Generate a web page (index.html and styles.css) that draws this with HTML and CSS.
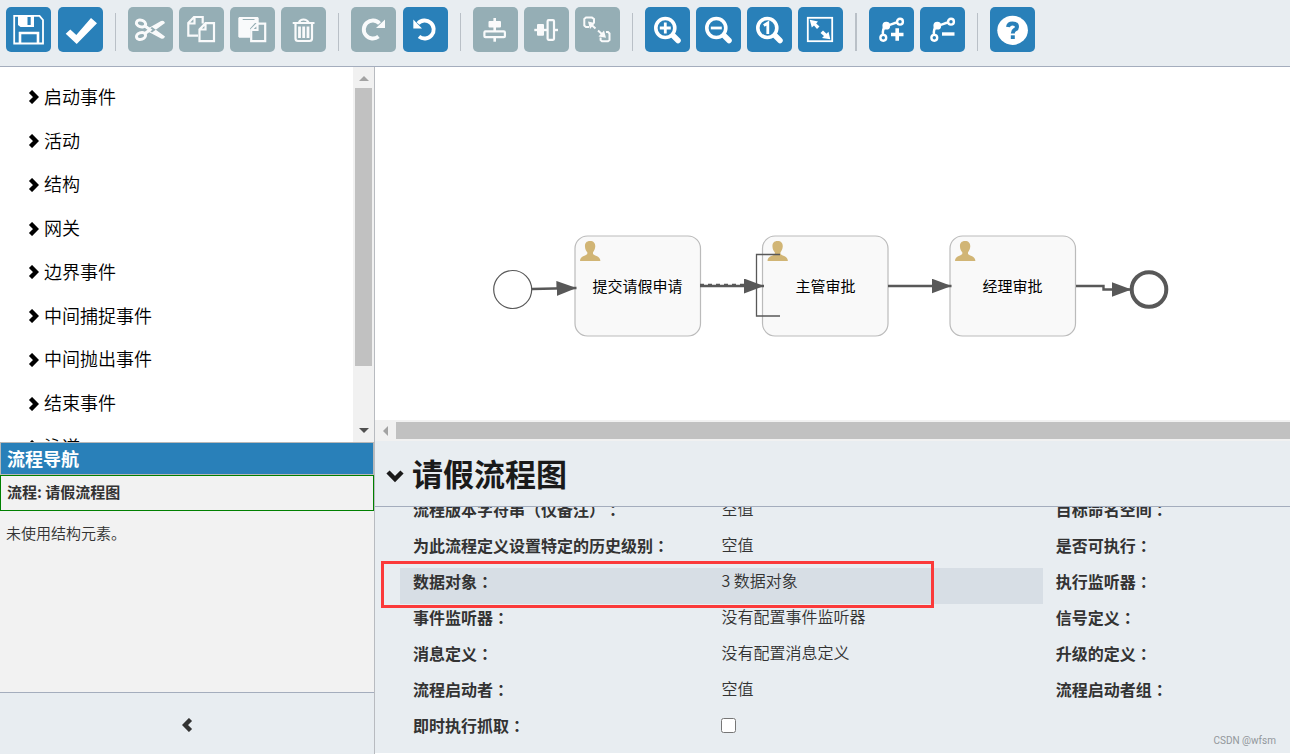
FILE: index.html
```html
<!DOCTYPE html>
<html lang="zh-CN">
<head>
<meta charset="utf-8">
<title>流程编辑器</title>
<link rel="stylesheet" href="styles.css">
</head>
<body>
<svg class="defs" width="0" height="0" aria-hidden="true">
  <defs>
    <path id="chevron" d="M2.500 1.500L8 7 2.500 12.500" fill="none" stroke="currentColor" stroke-width="4.400"/>
    <path id="person" d="M10 0c4 0 5.600 2.600 5.200 6-.3 2.400-1.200 4-2.200 5.200v1.900c1.500 1.800 7.200 2 7.400 6.900H0c.2-4.900 5.800-5.100 7.300-6.900v-1.900C6.100 10 5.200 8.400 5 6 4.700 2.600 6 0 10 0z" fill="#d1b575"/>
    <g id="lens">
      <circle cx="20.300" cy="21" r="9.500" fill="none" stroke="#fff" stroke-width="3.600"/>
      <path d="M28.500 29L33 33.500" stroke="#fff" stroke-width="5.500" stroke-linecap="round"/>
    </g>
    <g id="bend" fill="none" stroke="#fff" stroke-width="2.400">
      <circle cx="31" cy="14.700" r="2.900"/>
      <circle cx="14.300" cy="30.800" r="2.900"/>
      <path d="M28 15.500C24 16 22 18.500 17 18.500M17 18.500Q13 22 14 28"/>
      <circle cx="17.300" cy="18.700" r="2.700" fill="#fff"/>
    </g>
    <marker id="arrow" viewBox="0 0 20 15" refX="20" refY="7.500" markerWidth="20" markerHeight="15" markerUnits="userSpaceOnUse" orient="auto">
      <path d="M0 0L20 7.500 0 15z" fill="#585858"/>
    </marker>
  </defs>
</svg>

<header class="toolbar">
  <div class="group wide">
    <button class="tool" aria-label="保存"><svg viewBox="0 0 45 45"><path d="M8.200 8.800H33.500L37 13V36.500H8.200z" fill="none" stroke="#fff" stroke-width="1.800"/><path d="M12 8h16v12H14.500L12 18z" fill="#fff"/><path d="M21.500 10h3.200v8h-3.200z" fill="#2980b9"/><path d="M14 37V26h18v11" fill="none" stroke="#fff" stroke-width="2.600"/></svg></button>
    <button class="tool" aria-label="校验"><svg viewBox="0 0 45 45"><path d="M7.700 26.700L12.300 22.500 18.300 28 33 11 39 16.300 18.700 37z" fill="#fff"/></svg></button>
  </div>
  <span class="sep"></span>
  <div class="group">
    <button class="tool off" aria-label="剪切"><svg viewBox="0 0 45 45"><g fill="none" stroke="#fff" stroke-width="3"><ellipse cx="13" cy="16.500" rx="4.700" ry="3.300" transform="rotate(20 13 16.500)"/><ellipse cx="13" cy="29" rx="4.700" ry="3.300" transform="rotate(-20 13 29)"/><path d="M17 19L22 22.800 17 26.500"/></g><path d="M19 22L33 14q3-1 4 2L24 25.500zM19 24L33 31.500q3 1 4-2L24 20z" fill="#fff"/></svg></button>
    <button class="tool off" aria-label="复制"><svg viewBox="0 0 45 45"><g fill="none" stroke="#fff" stroke-width="2.200"><path d="M19 28.700H9.300V16L15 10H23.700V16.500M9.300 16.500H15.500V10"/><path d="M20.500 34.200V22.500L26.500 16.200H35V34.200zM20.500 22.500H26.500V16.200"/></g></svg></button>
    <button class="tool off" aria-label="粘贴"><svg viewBox="0 0 45 45"><path d="M9.300 10H27.700l1 1V16H25L20 21.500V30.700H9.300l-1-1V11z" fill="#fff"/><path d="M12.700 12.500H24.500" stroke="#95aeb5" stroke-width="1"/><path d="M21.200 34.200V23L27.500 16.700H35.200V34.200zM21.200 23H27.500V16.700" fill="none" stroke="#fff" stroke-width="2.200"/></svg></button>
    <button class="tool off" aria-label="删除"><svg viewBox="0 0 45 45"><g fill="none" stroke="#fff" stroke-width="2.200"><path d="M11.700 16H33.500M18 15.500Q19 12.500 22.500 12.500T27.500 15.500M14.500 16V31.500Q14.500 34 17 34H28.500Q31 34 31 31.500V16"/></g><path d="M18.500 19.500V31M22.700 19.500V31M27 19.500V31" stroke="#fff" stroke-width="2.800"/></svg></button>
  </div>
  <span class="sep"></span>
  <div class="group wide">
    <button class="tool off" aria-label="重做"><svg viewBox="0 0 45 45"><path d="M27.500 29.500A9 9 0 1 1 28.500 16.500" fill="none" stroke="#fff" stroke-width="3.900"/><path d="M34 12.500V21H25z" fill="#fff"/></svg></button>
    <button class="tool" aria-label="撤销"><svg viewBox="0 0 45 45"><path d="M16 29.500A9 9 0 1 0 15 16.500" fill="none" stroke="#fff" stroke-width="3.900"/><path d="M10.300 12.500V21.500H19z" fill="#fff"/></svg></button>
  </div>
  <span class="sep"></span>
  <div class="group">
    <button class="tool off" aria-label="垂直对齐"><svg viewBox="0 0 45 45"><path d="M21.700 11V34.700" stroke="#fff" stroke-width="2.600"/><rect x="15.500" y="14" width="12.500" height="6.500" rx="1" fill="#fff"/><rect x="11.400" y="24.400" width="20.500" height="5.800" rx="1" fill="#95aeb5" stroke="#fff" stroke-width="2.200"/></svg></button>
    <button class="tool off" aria-label="水平对齐"><svg viewBox="0 0 45 45"><path d="M10.300 23H34" stroke="#fff" stroke-width="2.400"/><rect x="13" y="17" width="7" height="11.700" rx="1" fill="#fff"/><rect x="23.600" y="13.200" width="6.400" height="19.600" rx="1" fill="#95aeb5" stroke="#fff" stroke-width="2.200"/></svg></button>
    <button class="tool off" aria-label="同样大小"><svg viewBox="0 0 45 45"><g fill="none" stroke="#fff" stroke-width="2"><path d="M14 20H11L9.300 18.500V12L11 10.600H17L19 12V16"/><path d="M31 25H33L34.500 26.500V33L33 34.200H27L25.600 33V30.500"/><path d="M15 16.500L20.500 21.500M23 23.500L29 29"/></g><path d="M13 14.500L20 16 15 22zM31 30.700L23.500 29.500 29 23.500z" fill="#fff"/></svg></button>
  </div>
  <span class="sep"></span>
  <div class="group">
    <button class="tool" aria-label="放大"><svg viewBox="0 0 45 45"><use href="#lens"/><path d="M14.800 21H25.800M20.300 15.500V26.500" stroke="#fff" stroke-width="2.800"/></svg></button>
    <button class="tool" aria-label="缩小"><svg viewBox="0 0 45 45"><use href="#lens"/><path d="M14.800 21H25.800" stroke="#fff" stroke-width="2.800"/></svg></button>
    <button class="tool" aria-label="实际大小"><svg viewBox="0 0 45 45"><use href="#lens"/><path d="M16.800 18.500L20.800 16V27" fill="none" stroke="#fff" stroke-width="2.800"/></svg></button>
    <button class="tool" aria-label="适应窗口"><svg viewBox="0 0 45 45"><rect x="9.800" y="10.800" width="24.400" height="23.400" fill="none" stroke="#fff" stroke-width="1.800"/><path d="M11.700 12.700L20 14.500 18.200 16.500 21.500 19.500 19 22 16 18.500 13.800 20.500zM32.300 32.300L24 31 26 29 22.500 26 25 23.500 28.500 26.800 30.500 24.800z" fill="#fff"/></svg></button>
  </div>
  <span class="sep thick"></span>
  <div class="group">
    <button class="tool" aria-label="添加拐点"><svg viewBox="0 0 45 45"><use href="#bend"/><path d="M22 27.500H34.500M28.200 21.300V33.700" stroke="#fff" stroke-width="3.600"/></svg></button>
    <button class="tool" aria-label="删除拐点"><svg viewBox="0 0 45 45"><use href="#bend"/><path d="M22 27H34.500" stroke="#fff" stroke-width="3.400"/></svg></button>
  </div>
  <span class="sep"></span>
  <div class="group">
    <button class="tool" aria-label="帮助"><svg viewBox="0 0 45 45"><ellipse cx="22.600" cy="23.300" rx="15.300" ry="14.600" fill="#fff"/><path d="M18 20Q18.500 16.500 22.500 16.500 27 16.500 27 20 27 21.800 24.500 23 22.800 24 22.800 26.500" fill="none" stroke="#2980b9" stroke-width="4"/><path d="M20.800 28.300h4v3.700h-4z" fill="#2980b9"/></svg></button>
  </div>
</header>

<main class="work">
  <aside class="side">
    <nav class="palette">
      <div class="listwrap">
        <ul class="list">
          <li><svg viewBox="0 0 11 14"><use href="#chevron"/></svg>启动事件</li>
          <li><svg viewBox="0 0 11 14"><use href="#chevron"/></svg>活动</li>
          <li><svg viewBox="0 0 11 14"><use href="#chevron"/></svg>结构</li>
          <li><svg viewBox="0 0 11 14"><use href="#chevron"/></svg>网关</li>
          <li><svg viewBox="0 0 11 14"><use href="#chevron"/></svg>边界事件</li>
          <li><svg viewBox="0 0 11 14"><use href="#chevron"/></svg>中间捕捉事件</li>
          <li><svg viewBox="0 0 11 14"><use href="#chevron"/></svg>中间抛出事件</li>
          <li><svg viewBox="0 0 11 14"><use href="#chevron"/></svg>结束事件</li>
          <li><svg viewBox="0 0 11 14"><use href="#chevron"/></svg>泳道</li>
        </ul>
      </div>
      <div class="vbar"><i class="up"></i><b class="vthumb"></b><i class="down"></i></div>
    </nav>
    <section class="navigator">
      <h2>流程导航</h2>
      <p class="process">流程: 请假流程图</p>
      <p class="empty">未使用结构元素。</p>
    </section>
    <button class="collapse" aria-label="收起"><svg viewBox="0 0 11 14"><path d="M8.500 1.500L3 7 8.500 12.500" fill="none" stroke="currentColor" stroke-width="4.400"/></svg></button>
  </aside>

  <div class="content">
    <section class="canvas">
      <svg class="diagram" width="915" height="353" viewBox="375 67 915 353">
        <g fill="#f9f9f9" stroke="#bbb" stroke-width="1.200">
          <rect x="575" y="236" width="125.500" height="100" rx="12.500"/>
          <rect x="762.500" y="236" width="125.500" height="100" rx="12.500"/>
          <rect x="950" y="236" width="125.500" height="100" rx="12.500"/>
        </g>
        <use href="#person" x="580" y="241"/>
        <use href="#person" x="767.500" y="241"/>
        <use href="#person" x="955" y="241"/>
        <circle cx="512.700" cy="289.500" r="19" fill="#fff" stroke="#585858" stroke-width="1.200"/>
        <circle cx="1149" cy="289.500" r="17.300" fill="#fff" stroke="#585858" stroke-width="4"/>
        <g fill="none" stroke="#585858" stroke-width="2.400">
          <path d="M532 289L576.500 288" marker-end="url(#arrow)"/>
          <path d="M700 286H764" marker-end="url(#arrow)"/>
          <path d="M888 286H951.500" marker-end="url(#arrow)"/>
          <path d="M1076 286H1103.500V289.500H1131.500" marker-end="url(#arrow)"/>
          <path d="M700 284.500H744" stroke-width="1.500" stroke-dasharray="4 4"/>
          <path d="M780 254.500H756.500V316H780" stroke-width="1.300"/>
        </g>
        <g class="names">
          <text x="637.500" y="292">提交请假申请</text>
          <text x="825.500" y="292">主管审批</text>
          <text x="1012.500" y="292">经理审批</text>
        </g>
      </svg>
    </section>
    <div class="hbar"><i class="left"></i><b class="hthumb"></b></div>
    <section class="props">
      <h1><svg viewBox="0 0 18 14"><path d="M2 3L9 10 16 3" fill="none" stroke="currentColor" stroke-width="4.500"/></svg>请假流程图</h1>
      <div class="fields">
        <div class="col">
          <div class="row"><span class="label">流程版本字符串（仅备注）<i lang="zh-TW">：</i></span><span class="value">空值</span></div>
          <div class="row"><span class="label">为此流程定义设置特定的历史级别<i lang="zh-TW">：</i></span><span class="value">空值</span></div>
          <div class="row active"><span class="label">数据对象<i lang="zh-TW">：</i></span><span class="value">3 数据对象</span></div>
          <div class="row"><span class="label">事件监听器<i lang="zh-TW">：</i></span><span class="value">没有配置事件监听器</span></div>
          <div class="row"><span class="label">消息定义<i lang="zh-TW">：</i></span><span class="value">没有配置消息定义</span></div>
          <div class="row"><span class="label">流程启动者<i lang="zh-TW">：</i></span><span class="value">空值</span></div>
          <div class="row"><label class="label" for="eager">即时执行抓取<i lang="zh-TW">：</i></label><span class="value"><input type="checkbox" id="eager"></span></div>
        </div>
        <div class="col">
          <div class="row"><span class="label">目标命名空间<i lang="zh-TW">：</i></span></div>
          <div class="row"><span class="label">是否可执行<i lang="zh-TW">：</i></span></div>
          <div class="row"><span class="label">执行监听器<i lang="zh-TW">：</i></span></div>
          <div class="row"><span class="label">信号定义<i lang="zh-TW">：</i></span></div>
          <div class="row"><span class="label">升级的定义<i lang="zh-TW">：</i></span></div>
          <div class="row"><span class="label">流程启动者组<i lang="zh-TW">：</i></span></div>
        </div>
      </div>
      <small class="mark">CSDN @wfsm</small>
    </section>
  </div>
</main>
</body>
</html>
```

FILE: styles.css
```css
*, *::after { box-sizing: border-box; }

body {
  margin: 0;
  height: 100vh;
  display: flex;
  flex-direction: column;
  overflow: hidden;
  background: #e8edf1;
  color: #333;
  font-family: "Noto Sans CJK SC", sans-serif;
  text-spacing-trim: space-all;
}

.defs { display: block; position: absolute; }

h1, h2, p, ul { margin: 0; padding: 0; }

/* toolbar */
.toolbar {
  display: flex;
  flex: none;
  padding: 7px 6px 14px;
  border-bottom: 1px solid #a4adbd;
}
.group { display: flex; gap: 6px; }
.wide { gap: 7px; }
.tool {
  width: 45px;
  height: 45px;
  padding: 0;
  border: 0;
  border-radius: 5px;
  background: #2980b9;
}
.tool svg { display: block; width: 100%; height: 100%; }
.off { background: #95aeb5; }
.off svg { opacity: .95; }
.sep { width: 1px; height: 38px; margin: 6px 12px 0; background: #b9c0c7; }
.thick { width: 2px; }

.work { display: flex; flex: 1; min-height: 0; }

/* left side */
.side {
  flex: none;
  width: 375px;
  display: flex;
  flex-direction: column;
  border-right: 1px solid #b8bbc0;
}
.palette { display: flex; flex: 3; min-height: 0; background: #fff; }
.listwrap { flex: 1; overflow: hidden; padding-top: 7px; }
.list {
  display: grid;
  grid-auto-rows: 1fr;
  height: 107%;
  padding-left: 28px;
  list-style: none;
}
.list li {
  display: flex;
  align-items: center;
  gap: 5px;
  color: #000;
  font-size: 18px;
  font-weight: 350;
  line-height: 24px;
}
.list svg { width: 11px; height: 14px; margin-top: 3px; }

.vbar {
  width: 21px;
  padding: 9px 2px;
  display: flex;
  flex-direction: column;
  align-items: center;
  background: #f1f1f1;
}
.vthumb { width: 17px; height: 78%; margin: 7px 0 auto; background: #c1c1c1; }
.up { border: 5px solid transparent; border-top: 0; border-bottom-color: #a3a3a3; }
.down { border: 5px solid transparent; border-bottom: 0; border-top-color: #505050; }

.navigator { flex: 2; background: #f2f2f2; }
.navigator h2 {
  padding: 0 6px;
  border: 1px solid #b8b8b8;
  background: #2980b9;
  color: #fff;
  font-size: 18px;
  line-height: 31px;
}
.process {
  padding: 0 6px 2px;
  border: 1px solid #008000;
  font-size: 15px;
  font-weight: 700;
  line-height: 32px;
}
.empty {
  padding: 11px 6px;
  font-size: 15px;
  font-weight: 350;
  line-height: 22px;
}
.collapse {
  flex: none;
  height: 62px;
  padding: 6px 0 0;
  border: 0;
  border-top: 1px solid #a4adbd;
  background: #e8edf1;
  color: #333;
}
.collapse svg { width: 11px; height: 14px; }

/* right side */
.content { flex: 1; min-width: 0; display: flex; flex-direction: column; }
.canvas { flex: 1; min-height: 0; overflow: hidden; background: #fff; }
.diagram { display: block; }
.names { font-size: 15px; text-anchor: middle; fill: #000; }

.hbar {
  display: flex;
  align-items: center;
  flex: none;
  height: 21px;
  padding-left: 8px;
  background: #f1f1f1;
}
.left { border: 5px solid transparent; border-left: 0; border-right-color: #a3a3a3; }
.hthumb { flex: 1; height: 17px; margin-left: 8px; background: #c1c1c1; }

.props {
  position: relative;
  flex: none;
  border-bottom: 1px solid #fff;
}
.props h1 {
  display: flex;
  align-items: center;
  gap: 8px;
  height: 66px;
  padding: 0 0 2px 11px;
  border-bottom: 1px solid #a4adbd;
  color: #1a1a1a;
  font-size: 31px;
  line-height: 40px;
}
.props h1 svg { width: 18px; height: 14px; margin-top: 6px; }

.fields {
  display: grid;
  grid-template-columns: 13fr 5fr;
  height: 246px;
  padding-left: 25px;
  overflow: hidden;
}
.col { margin-top: -11px; }
.row {
  position: relative;
  display: grid;
  grid-template-columns: 1fr 1fr;
  height: 36px;
  font-size: 16px;
}
.label {
  padding-left: 13px;
  font-weight: 700;
  line-height: 27px;
  white-space: nowrap;
}
.label i { font-family: "Noto Sans CJK TC", sans-serif; font-style: normal; }
.value { font-weight: 350; line-height: 25px; }
.value input { display: block; width: 15px; height: 15px; margin: 6px 0 0; }

.active { background: #d7dee5; }
.active::after {
  content: "";
  position: absolute;
  top: -7px;
  bottom: -4px;
  left: -19px;
  width: 86%;
  border: 3px solid #fb3a3a;
}

.mark {
  position: absolute;
  right: 14px;
  bottom: 7px;
  color: #92979b;
  font: 10px Roboto, sans-serif;
}
```
